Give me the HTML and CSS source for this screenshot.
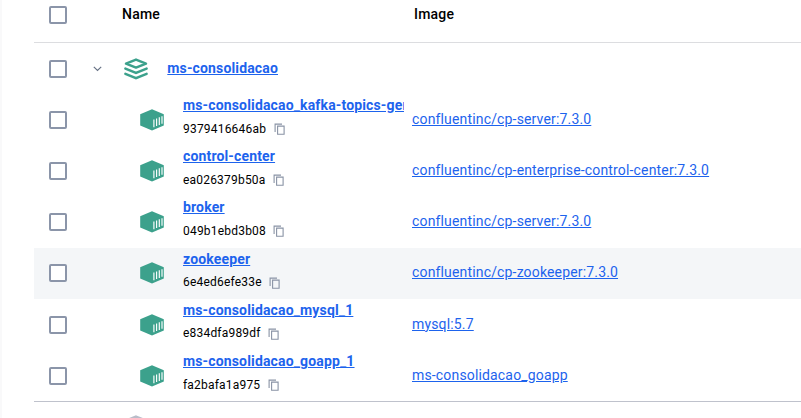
FILE: index.html
```
<!DOCTYPE html>
<html lang="en">
<head>
<meta charset="utf-8">
<title>Containers</title>
<link rel="stylesheet" href="styles.css">
</head>
<body>
<svg class="defs" width="0" height="0">
  <symbol id="cube" viewBox="0 0 24 22">
    <path d="M12 0.2 23.8 5.2V16.4L12 21.6 0.2 16.4V5.2Z" fill="#3ca18c"/>
    <path d="M13.9 10.6V18.2M16.6 9.5V17.1M19.3 8.3V15.9M22 7.2V14.8" stroke="#fff" stroke-width="1.15" fill="none"/>
  </symbol>
  <symbol id="copy" viewBox="0 0 12 12">
    <path d="M1.1 9V1.1H8M3.6 3.1H10.1V11.3H3.6Z" fill="none" stroke="#8993a5" stroke-width="1.1"/>
  </symbol>
  <symbol id="stack" viewBox="0 0 24 22">
    <path d="M12 1.6 22 5.6 12 9.6 2 5.6Z" fill="none" stroke="#3ca18c" stroke-width="2.5" stroke-linejoin="round"/>
    <path d="M1.4 10.6 12 14.9 22.6 10.6M1.4 15.9 12 20.2 22.6 15.9" fill="none" stroke="#3ca18c" stroke-width="2.5" stroke-linecap="round"/>
  </symbol>
</svg>
<main class="panel">
  <div class="row head">
    <span class="check"></span><b class="title">Name</b><b class="image-title">Image</b>
  </div>
  <div class="row group">
    <span class="check"></span>
    <svg class="chevron" viewBox="0 0 9 6"><path d="M.8 .9 4.5 4.4 8.2 .9" fill="none" stroke="#677285" stroke-width="1.2"/></svg>
    <svg class="stack"><use href="#stack"/></svg>
    <a class="name">ms-consolidacao</a>
  </div>
  <div class="row">
    <span class="check"></span><svg class="cube"><use href="#cube"/></svg>
    <div class="info"><a class="name">ms-consolidacao_kafka-topics-generator_1</a><div class="id">9379416646ab<svg class="copy"><use href="#copy"/></svg></div></div>
    <a class="image">confluentinc/cp-server:7.3.0</a>
  </div>
  <div class="row">
    <span class="check"></span><svg class="cube"><use href="#cube"/></svg>
    <div class="info"><a class="name">control-center</a><div class="id">ea026379b50a<svg class="copy"><use href="#copy"/></svg></div></div>
    <a class="image">confluentinc/cp-enterprise-control-center:7.3.0</a>
  </div>
  <div class="row">
    <span class="check"></span><svg class="cube"><use href="#cube"/></svg>
    <div class="info"><a class="name">broker</a><div class="id">049b1ebd3b08<svg class="copy"><use href="#copy"/></svg></div></div>
    <a class="image">confluentinc/cp-server:7.3.0</a>
  </div>
  <div class="row active">
    <span class="check"></span><svg class="cube"><use href="#cube"/></svg>
    <div class="info"><a class="name">zookeeper</a><div class="id">6e4ed6efe33e<svg class="copy"><use href="#copy"/></svg></div></div>
    <a class="image">confluentinc/cp-zookeeper:7.3.0</a>
  </div>
  <div class="row">
    <span class="check"></span><svg class="cube"><use href="#cube"/></svg>
    <div class="info"><a class="name">ms-consolidacao_mysql_1</a><div class="id">e834dfa989df<svg class="copy"><use href="#copy"/></svg></div></div>
    <a class="image">mysql:5.7</a>
  </div>
  <div class="row">
    <span class="check"></span><svg class="cube"><use href="#cube"/></svg>
    <div class="info"><a class="name">ms-consolidacao_goapp_1</a><div class="id">fa2bafa1a975<svg class="copy"><use href="#copy"/></svg></div></div>
    <a class="image">ms-consolidacao_goapp</a>
  </div>
  <div class="row next">
    <svg class="stack-next" viewBox="0 0 24 22"><path d="M12 1.6 22.4 5.6 12 9.6 1.6 5.6Z" fill="none" stroke="#b9bdc9" stroke-width="2.3"/></svg>
  </div>
</main>
</body>
</html>
```
FILE: styles.css
```
* { box-sizing: border-box; }
body {
  margin: 0;
  height: 418px;
  overflow: hidden;
  background: #fff;
  color: #000;
  font-family: Roboto, sans-serif;
  font-size: 14px;
}
.defs { display: none; }
.panel {
  height: 418px;
  padding-left: 32px;
  border-left: 2px solid #f9f9fa;
  overflow: hidden;
}
.row {
  display: flex;
  height: 51.2px;
  padding-left: 15px;
}
.check {
  flex: none;
  width: 18px;
  height: 18px;
  margin-top: 16.85px;
  border: 2px solid #8b95a9;
  border-radius: 2px;
  background: #fff;
}
.head {
  height: 43px;
  border-bottom: 1px solid #dcdde0;
}
.group { height: 51px; }
.group .check { margin-top: 17px; }
.head .check { margin-top: 6px; }
.title, .image-title {
  margin-top: 6px;
  line-height: 16px;
  font-weight: 500;
  letter-spacing: .2px;
}
.title { width: 292px; margin-left: 55px; }
.chevron { width: 9px; height: 6px; margin: 23px 0 0 26px; }
.stack { width: 24px; height: 22px; margin: 15px 0 0 22px; }
.name {
  display: block;
  font-weight: 700;
  line-height: 18px;
  color: #1d63ed;
  text-decoration: underline;
  white-space: nowrap;
  letter-spacing: .15px;
}
.group .name { margin: 16px 0 0 19.3px; }
.cube { flex: none; width: 24px; height: 22px; margin: 14.85px 0 0 73px; }
.info { flex: none; width: 221px; margin: 2px 0 0 19px; overflow: hidden; }
.id {
  display: flex;
  align-items: center;
  margin-top: 5.6px;
  font-size: 12px;
  line-height: 18px;
  letter-spacing: .2px;
}
.copy { width: 12px; height: 12px; margin: 1px 0 0 7.5px; }
.image {
  margin: 15.8px 0 0 8px;
  line-height: 18px;
  color: #1d63ed;
  text-decoration: underline;
  white-space: nowrap;
  letter-spacing: .16px;
}
.active { background: #f4f6f8; }
.next { border-top: 1px solid #bfc2cc; }
.stack-next { width: 24px; height: 22px; margin: 13px 0 0 75px; }
```
